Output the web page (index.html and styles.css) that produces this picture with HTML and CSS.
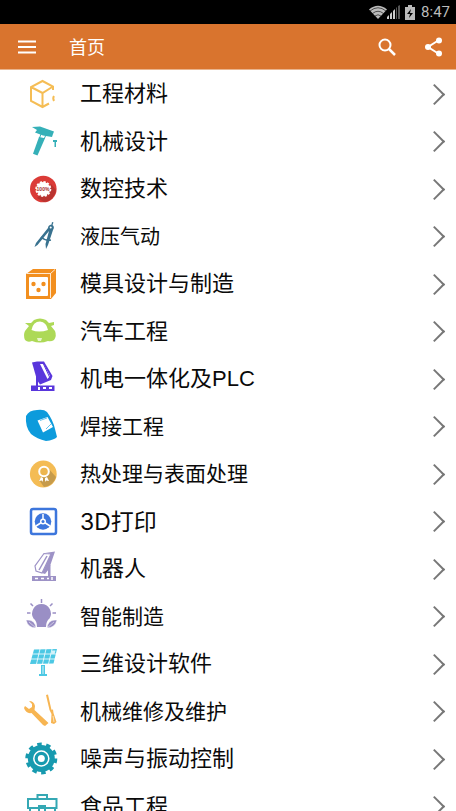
FILE: index.html
```html
<!DOCTYPE html>
<html lang="zh-CN">

<head>
    <meta charset="utf-8">
    <meta name="viewport" content="width=device-width, initial-scale=1">
    <title>首页</title>
    <link rel="stylesheet" href="styles.css">
</head>

<body>
    <div class="status">
        <svg width="18" height="14" viewBox="0 0 18 14">
            <path d="M0 4.500Q9-3 18 4.500L9 14Z" fill="#bbb" />
            <path d="M1 6Q9-.5 17 6M3.500 8.500Q9 4 14.500 8.500M6 11Q9 8.500 12 11" fill="none" stroke="#000" stroke-width=".6" />
        </svg>
        <svg width="14" height="14" viewBox="0 0 14 14">
            <path d="M0 14V12L2 10V14ZM3 14V9L5 7V14ZM6 14V6L8 4V14Z" fill="#ccc" />
            <path d="M9 14V3L10 2V14ZM11 14V1L13 0V14Z" fill="#555" />
        </svg>
        <svg class="battery" width="10" height="15" viewBox="0 0 10 15">
            <path d="M0 2H3V0H7V2H10V15H0Z" fill="#bbb" />
            <path d="M6 4L2 9H5L4 13L8 8H5Z" fill="#000" />
        </svg>
        <span>8:47</span>
    </div>

    <header class="bar">
        <button class="menu" aria-label="菜单">
            <svg width="18" height="14" viewBox="0 0 18 14">
                <path d="M0 1.500H18M0 7H18M0 12.500H18" stroke="#fff" stroke-width="2" />
            </svg>
        </button>
        <h1>首页</h1>
        <button aria-label="搜索">
            <svg width="20" height="20" viewBox="0 0 20 20" fill="none" stroke="#fff" stroke-width="2">
                <circle cx="8" cy="8" r="5.500" />
                <path d="M12 12L18 18" stroke-width="2.500" />
            </svg>
        </button>
        <button aria-label="分享">
            <svg width="20" height="20" viewBox="0 0 20 20" fill="#fff">
                <path d="M16 3L5 10L16 17" fill="none" stroke="#fff" stroke-width="2" />
                <circle cx="16" cy="3.500" r="3" />
                <circle cx="5" cy="10" r="3" />
                <circle cx="16" cy="16.500" r="3" />
            </svg>
        </button>
    </header>

    <ul class="list">
        <li><a href="#">
            <svg class="icon" viewBox="0 0 40 36" fill="none" stroke="#f5bd55" stroke-width="2">
                <path d="M31 14V10.500L20.500 5L9 11V25L20.500 31L27 27.500M9 11L20.500 17L31 10.500M20.500 17V31M32 20Q30.500 22 32 25" />
            </svg>
            <span>工程材料</span></a></li>
        <li><a href="#">
            <svg class="icon" viewBox="0 0 40 36" fill="#35b0b8">
                <path d="M10 3L18 2.500L32 7.500L31 10L30 13L21 11.500L13 8.500L15 6Z" />
                <path d="M17 13L23 14.200L15.500 31.500L11 29.800Z" />
                <path d="M19 10L17.500 14M24 11L22 15" stroke="#35b0b8" />
                <path d="M31 16H35V18H34V23H32.500V18H31Z" />
            </svg>
            <span>机械设计</span></a></li>
        <li><a href="#">
            <svg class="icon" viewBox="0 0 40 36">
                <circle cx="21.300" cy="18" r="13.300" fill="#db3b37" />
                <path d="M15 27L29 13L34 19A13 13 0 0 1 22 31Z" fill="#b93430" />
                <circle cx="21.300" cy="18" r="6.500" fill="#fff" stroke="#fff" />
                <circle cx="21.300" cy="18" r="7" fill="none" stroke="#fff" stroke-width="2" stroke-dasharray="2.200 1.460" />
                <text class="seal" x="21" y="20" text-anchor="middle">100%</text>
            </svg>
            <span>数控技术</span></a></li>
        <li><a href="#">
            <svg class="icon" viewBox="0 0 40 36" fill="#39728f">
                <path d="M30 3L31.500 3.500L30.500 6Q33 8 31 11L26 26L24 30L23.500 25L27 12L15.500 26L12.500 28L14 24L26 9Q26 6 29.500 5.500Z" />
                <path d="M19 18Q23 22 29 21" fill="none" stroke="#39728f" stroke-width="1.500" />
                <circle cx="28.700" cy="8.500" r="1" fill="#fff" />
            </svg>
            <span class="xs">液压气动</span></a></li>
        <li><a href="#">
            <svg class="icon" viewBox="0 0 40 36" fill="#f28f1f">
                <path d="M4 8L11 3H34V27L29 33H4Z" />
                <path d="M5 7.500H28.500V32M28.500 7.500L33 3.500" fill="none" stroke="#fff" stroke-width=".8" />
                <rect x="7" y="11" width="19" height="19" rx="1" fill="#fff" />
                <circle cx="11.500" cy="18" r="2.200" />
                <circle cx="21.500" cy="18" r="2.200" />
                <circle cx="16.500" cy="24" r="2.200" />
            </svg>
            <span>模具设计与制造</span></a></li>
        <li><a href="#">
            <svg class="icon" viewBox="0 0 40 36" fill="#add957">
                <path d="M3 9L9 9L12 6Q18 3 24 6L27 9L32 8L32 11L29 12L33 17Q35 22 32 26Q29 28 26 27Q18 30 10 27Q6 29 3 26Q1 21 3 17L7 12Z" />
                <path d="M9.500 16Q11 7.500 18 7.500Q24.500 8 26 16Q17 19 9.500 16Z" fill="#fff" />
                <path d="M15 24H20L19 27H16Z" fill="#e8f5cc" />
            </svg>
            <span>汽车工程</span></a></li>
        <li><a href="#">
            <svg class="icon" viewBox="0 0 40 36" fill="#5936dc">
                <path d="M9 24.500H32.500V30H9Z" />
                <path d="M10 1.500L15 .5H22L30.500 15L29 19L18 23.500L15 19Z" />
                <path d="M18 3H21.500L28 15L25.500 18Z" fill="#fff" />
                <path d="M21 2L28 17" stroke="#5936dc" stroke-width="1" />
                <path d="M14 14H16V25H14Z" />
                <path d="M17 26V29M21 27H24M27 27H30" stroke="#fff" stroke-width="2" />
            </svg>
            <span>机电一体化及PLC</span></a></li>
        <li><a href="#">
            <svg class="icon" viewBox="0 0 40 36">
                <path d="M4 7Q7 1 15 1Q22 0 25 3Q31 11 33 20L35 28Q32 31 24 32Q15 30 9 25Q3 18 4 7Z" fill="#0d9bdc" />
                <path d="M15.500 11.500L25.500 8L31 18L21 23.500Z" fill="#fff" />
                <path d="M24 20L29 15M18 11.500L25 9" stroke="#6bc2ea" />
            </svg>
            <span class="sm">焊接工程</span></a></li>
        <li><a href="#">
            <svg class="icon" viewBox="0 0 40 36">
                <circle cx="21.300" cy="18" r="13.400" fill="#f4bc55" />
                <path d="M26 12L34 21Q31 30 22 31L17 24Z" fill="#c69b4b" />
                <circle cx="22" cy="15.500" r="4.800" fill="#edb650" stroke="#fff" stroke-width="2" />
                <path d="M19 21L17 25L20 24.500L21 26V22ZM25 21L27 25L24 24.500L23 26V22Z" fill="#fff" />
            </svg>
            <span class="sm">热处理与表面处理</span></a></li>
        <li><a href="#">
            <svg class="icon" viewBox="0 0 40 36">
                <rect x="9" y="5" width="25" height="25" rx="2" fill="#fff" stroke="#3d76dc" stroke-width="2.500" />
                <circle cx="21" cy="17.500" r="8.300" fill="#3d76dc" />
                <path d="M21 17.500V10M21 17.500L14 22M21 17.500L28 22" stroke="#fff" stroke-width="1.500" />
                <circle cx="21" cy="17.500" r="3" fill="#fff" />
                <circle cx="21" cy="17.500" r="1.500" fill="#3d76dc" />
            </svg>
            <span class="lg">3D打印</span></a></li>
        <li><a href="#">
            <svg class="icon" viewBox="0 0 40 36" fill="#9d92c6">
                <path d="M10 25H34V30H10Z" />
                <path d="M23 2L33 .5L27 18L23 23L20 22L29 3Z" />
                <path d="M22 2.500L13 15L14 20L20 22L29 3Z" fill="#fff" stroke="#9d92c6" stroke-width="1.200" />
                <path d="M25 5L17 19" stroke="#9d92c6" stroke-width="1.500" />
                <path d="M26 14H28.500V25H26Z" />
                <path d="M13 27.500H16M19 27.500H22M25 27.500H27M30 26V29" stroke="#fff" stroke-width="1.500" />
            </svg>
            <span>机器人</span></a></li>
        <li><a href="#">
            <svg class="icon" viewBox="0 0 40 36" fill="#9a8fc5">
                <path d="M19.500 5A9.500 9.500 0 0 0 11.500 19.500Q15 22 15 28H24Q24 22 27.500 19.500A9.500 9.500 0 0 0 19.500 5Z" />
                <path d="M19.500 0V4M8.500 4.500L11 7M30.500 4.500L28 7M5 14H8.500M30.500 14H34" stroke="#9a8fc5" stroke-width="1.500" />
                <path d="M4 21Q13 20 14 29Q6 29 4 21ZM35 21Q26 20 25 29Q33 29 35 21Z" stroke="#fff" stroke-width=".5" />
                <path d="M7 23L14 29M32 23L25 29" stroke="#fff" stroke-width=".5" />
            </svg>
            <span class="sm">智能制造</span></a></li>
        <li><a href="#">
            <svg class="icon" viewBox="0 0 40 36" fill="#4cc8e4">
                <path d="M12 3.500L35 3L31.500 17.500L8 18Z" />
                <path d="M10.500 8H34M9 13H33M18 3L14.500 18M24 3L20.500 18M30 3L26.500 18" stroke="#fff" stroke-width=".8" />
                <path d="M29.500 4.500H33.500L32.500 8H29Z" fill="#d4f2f8" />
                <path d="M19 19H23V28H25V30H17V28H19Z" />
                <path d="M21 20V28" stroke="#d4f2f8" />
            </svg>
            <span>三维设计软件</span></a></li>
        <li><a href="#">
            <svg class="icon" viewBox="0 0 40 36" fill="#f7b552">
                <path d="M7 7Q12 7 13 12L12.500 16L26.500 29L23 32L21 31L9.500 19Q4 20 2 14L3 12L7 15L10 13V10Z" />
                <path d="M24 1L26 .5L29.500 16H27.500Z" />
                <path d="M27.500 16L31 15.500L31.500 19L34.500 28L32 30L29 29L29.500 20Z" />
                <path d="M31 22L32 28" stroke="#fff" stroke-width=".6" />
            </svg>
            <span class="sm">机械维修及维护</span></a></li>
        <li><a href="#">
            <svg class="icon" viewBox="0 0 40 36" fill="none" stroke="#179aaf">
                <circle cx="19.300" cy="17.500" r="14" stroke-width="4" stroke-dasharray="4.400 4.396" />
                <circle cx="19.300" cy="17.500" r="13.500" fill="#179aaf" stroke="none" />
                <circle cx="19.300" cy="17.500" r="7.500" stroke="#fff" stroke-width="1.500" />
                <circle cx="19.300" cy="17.500" r="3.500" fill="#fff" stroke="none" />
            </svg>
            <span>噪声与振动控制</span></a></li>
        <li><a href="#">
            <svg class="icon" viewBox="0 0 40 36" fill="none" stroke="#35a8b4" stroke-width="2">
                <path d="M15.500 10V6H25V10M6 10H34.500V19H6ZM8 20V32H33V20M17 17H23V23H17Z" />
            </svg>
            <span>食品工程</span></a></li>
    </ul>
</body>

</html>
```
FILE: styles.css
```css
* {
    box-sizing: border-box;
}

body {
    margin: 0;
    height: 100vh;
    display: flex;
    flex-direction: column;
    overflow: hidden;
    background-color: white;
    font-family: "Liberation Sans", "Noto Sans CJK SC", sans-serif;
    color: #0a0a0a;
}

.status {
    flex: none;
    height: 24px;
    padding-right: 6px;
    display: flex;
    align-items: center;
    justify-content: flex-end;
    background-color: black;
    color: #bbb;
    font-family: Roboto, sans-serif;
    font-size: 15px;
    line-height: 24px;
}

.battery {
    margin: 0 6px 0 4px;
}

.bar {
    flex: none;
    height: 46px;
    padding: 0 3px 0 8px;
    display: flex;
    align-items: center;
    background-color: #d9742e;
    border-bottom: solid 1px #e9b48e;
}

.bar h1 {
    flex: 1;
    margin: 0 0 0 23px;
    padding-bottom: 2px;
    color: white;
    font-size: 18px;
    font-weight: 400;
}

.bar button {
    width: 40px;
    height: 40px;
    margin-left: 6px;
    padding: 0;
    display: flex;
    align-items: center;
    justify-content: center;
    border: none;
    background: none;
}

.bar .menu {
    width: 38px;
    margin-left: 0;
}

.list {
    flex: 1;
    min-height: 0;
    margin: 0;
    padding: 0;
    list-style: none;
    overflow-y: auto;
    scrollbar-width: none;
}

.list a {
    height: 48px;
    padding: 0 14px 0 22px;
    display: flex;
    align-items: center;
    color: inherit;
    font-size: 22px;
    line-height: 34px;
    text-decoration: none;
}

.list li:nth-child(even) a {
    height: 47px;
}

/* arrow on the right of every row */
.list a::after {
    content: "";
    width: 13px;
    height: 13px;
    margin-left: auto;
    border-top: solid 2px #777;
    border-right: solid 2px #777;
    transform: rotate(45deg);
}

.icon {
    width: 40px;
    height: 36px;
    margin-right: 18px;
}

.seal {
    fill: #a32b28;
    font: bold 5px "Liberation Sans", sans-serif;
}

.list .xs {
    font-size: 20px;
}

.list .sm {
    font-size: 21px;
}

.list .lg {
    font-family: Inter, "Noto Sans CJK SC", sans-serif;
    font-size: 23px;
}
```
